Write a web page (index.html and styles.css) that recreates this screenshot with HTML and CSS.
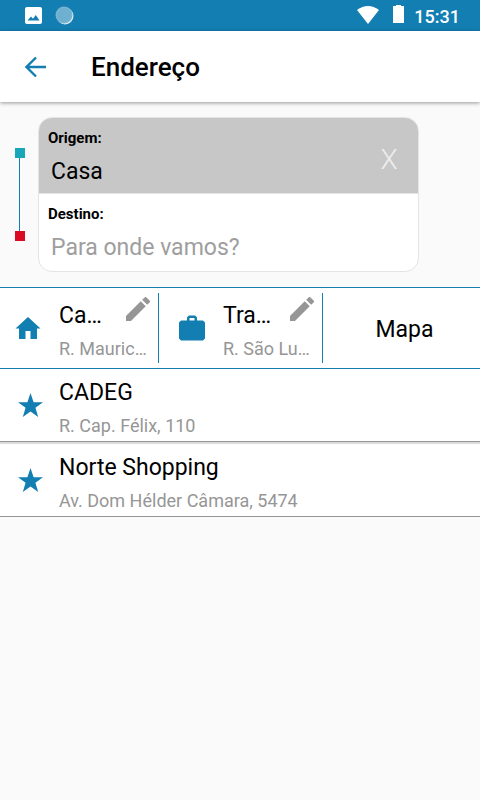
FILE: index.html
```html
<!DOCTYPE html>
<html lang="pt-BR">
<head>
<meta charset="utf-8">
<meta name="viewport" content="width=device-width, initial-scale=1">
<title>Endereço</title>
<link rel="stylesheet" href="styles.css">
</head>
<body>
<div class="status">
  <svg class="status-photo" width="17" height="17" viewBox="0 0 17 17" aria-hidden="true"><rect width="17" height="17" rx="2" fill="#fff"/><path d="M2.500 13.500 6 9.500 8 11.700 10.800 8 14.500 13.500Z" fill="#127eb1"/></svg>
  <svg class="status-sync" width="19" height="19" viewBox="0 0 19 19" aria-hidden="true"><circle cx="10" cy="10" r="8.500" fill="#dcecf4"/><circle cx="9" cy="9" r="8.500" fill="#6fb0d0"/><circle cx="9" cy="9" r="7.500" fill="none" stroke="#86bcd7" stroke-dasharray="1 1"/></svg>
  <svg class="status-wifi" width="22" height="18" viewBox="0 0 22 18" aria-hidden="true"><path d="M0 4Q11-4 22 4L11 18Z" fill="#fff"/></svg>
  <svg class="status-battery" width="11" height="18" viewBox="0 0 11 18" aria-hidden="true"><path d="M0 1H3V0H8V1H11V18H0Z" fill="#fff"/></svg>
  <time class="clock">15:31</time>
</div>
<header class="toolbar">
  <button class="back" type="button" aria-label="Voltar"><svg width="22" height="22" viewBox="0 0 22 22"><path d="M21 11H2M11 1.500 1.500 11 11 20.500" fill="none" stroke="#127eb1" stroke-width="2.400"/></svg></button>
  <h1 class="title">Endereço</h1>
</header>
<main>
  <form class="route">
    <div class="track" aria-hidden="true"><span class="stop stop-from"></span><span class="rail"></span><span class="stop stop-to"></span></div>
    <div class="card">
      <div class="field field-from">
        <div class="entry">
          <label class="label" for="origem">Origem:</label>
          <input class="input" id="origem" type="text" value="Casa">
        </div>
        <button class="clear" type="button" aria-label="Limpar origem">X</button>
      </div>
      <div class="field">
        <div class="entry">
          <label class="label" for="destino">Destino:</label>
          <input class="input" id="destino" type="text" placeholder="Para onde vamos?">
        </div>
      </div>
    </div>
  </form>
  <section class="shortcuts">
    <div class="shortcut">
      <svg class="place-icon" width="26" height="26" viewBox="0 0 26 26" aria-hidden="true"><path d="M13 2 25.500 13.500H22V24H15.500V16H10.500V24H4V13.500H.5Z" fill="#127eb1"/></svg>
      <div class="place">
        <div class="place-head"><span class="name">Ca…</span><button class="edit" type="button" aria-label="Editar Casa"><svg width="24" height="24" viewBox="3 3 18 18"><path d="M3 17.250V21h3.750L17.810 9.940l-3.750-3.750L3 17.250zM20.710 7.040a1 1 0 0 0 0-1.410l-2.340-2.340a1 1 0 0 0-1.410 0l-1.830 1.830 3.750 3.750 1.830-1.830z" fill="#969696"/></svg></button></div>
        <div class="address">R. Mauric…</div>
      </div>
    </div>
    <div class="shortcut">
      <svg class="place-icon" width="26" height="26" viewBox="0 0 26 26" aria-hidden="true"><path d="M2 5.500H8V2.200L10 .5H16L18 2.200V5.500H24L26 7.500V23.500L24 25.500H2L0 23.500V7.500ZM10.500 5.500H15.500V3H10.500Z" fill="#127eb1" fill-rule="evenodd"/></svg>
      <div class="place">
        <div class="place-head"><span class="name">Tra…</span><button class="edit" type="button" aria-label="Editar Trabalho"><svg width="24" height="24" viewBox="3 3 18 18"><path d="M3 17.250V21h3.750L17.810 9.940l-3.750-3.750L3 17.250zM20.710 7.040a1 1 0 0 0 0-1.410l-2.340-2.340a1 1 0 0 0-1.410 0l-1.830 1.830 3.750 3.750 1.830-1.830z" fill="#969696"/></svg></button></div>
        <div class="address">R. São Lu…</div>
      </div>
    </div>
    <button class="map" type="button">Mapa</button>
  </section>
  <ul class="favorites">
    <li class="favorite">
      <svg class="star" width="26" height="26" viewBox="0 0 26 26" aria-hidden="true"><path d="M12.500 1 15.600 10.200H25L17.400 15.800 20.200 25 12.500 19.400 4.800 25 7.600 15.800 0 10.200H9.400Z" fill="#127eb1"/></svg>
      <div class="place"><div class="name">CADEG</div><div class="address">R. Cap. Félix, 110</div></div>
    </li>
    <li class="favorite">
      <svg class="star" width="26" height="26" viewBox="0 0 26 26" aria-hidden="true"><path d="M12.500 1 15.600 10.200H25L17.400 15.800 20.200 25 12.500 19.400 4.800 25 7.600 15.800 0 10.200H9.400Z" fill="#127eb1"/></svg>
      <div class="place"><div class="name">Norte Shopping</div><div class="address">Av. Dom Hélder Câmara, 5474</div></div>
    </li>
  </ul>
</main>
</body>
</html>
```
FILE: styles.css
```css
* { box-sizing: border-box; }
body { margin: 0; background: #fafafa; color: #000; font-family: Roboto, sans-serif; font-size: 23px; line-height: 28px; }
button, input { font: inherit; color: inherit; border: 0; background: none; padding: 0; margin: 0; }
svg { display: block; flex: none; }

.status { display: flex; align-items: center; height: 31px; padding: 0 20px 0 25px; background: #127eb1; color: #fff; }
.status-sync { margin-left: 13px; }
.status-wifi { margin: 0 0 2px auto; }
.status-battery { margin: 0 10px 3px 14px; }
.clock { font-size: 18px; font-weight: 500; line-height: 20px; padding-top: 2px; }

.toolbar { display: flex; align-items: center; height: 71px; padding: 0 25px; background: #fff; box-shadow: 0 1px 4px rgba(0, 0, 0, .4); }
.back { width: 66px; }
.title { margin: 0; font-size: 26px; font-weight: 500; line-height: 32px; }

.route { display: flex; align-items: center; padding: 15px 61px 15px 14px; }
.track { display: flex; flex-direction: column; align-items: center; width: 11px; margin-right: 13px; }
.stop { width: 10px; height: 10px; }
.stop-from { background: #18a7b9; }
.stop-to { background: #d90a22; }
.rail { width: 1px; height: 73px; background: #127eb1; }
.card { flex: 1; overflow: hidden; border: 1px solid #e4e4e4; border-radius: 14px; background: #fff; }
.field { display: flex; align-items: center; height: 77px; padding: 10px 9px 4px; }
.field-from { height: 76px; padding-bottom: 2px; background: #c7c7c7; border-bottom: 1px solid #e4e4e4; }
.entry { flex: 1; min-width: 0; }
.label { display: block; font-size: 15px; font-weight: 700; line-height: 20px; }
.input { display: block; width: 100%; height: 44px; padding: 4px 0 0 3px; outline: 0; }
.input::placeholder { color: #9e9e9e; opacity: 1; }
.clear { width: 40px; color: #eee; font-size: 28px; font-weight: 300; }

.shortcuts { display: grid; grid-template-columns: 159fr 164fr 157fr; height: 82px; padding: 5px 0; border: solid #127eb1; border-width: 1px 0; background: #fff; }
.shortcut { display: flex; align-items: center; padding: 0 8px 0 15px; border-right: 1px solid #127eb1; }
.shortcut + .shortcut { padding-left: 20px; }
.place-icon { margin-right: 18px; }
.place { flex: 1; min-width: 0; padding-top: 2px; }
.place-head { display: flex; justify-content: space-between; }
.edit { height: 24px; margin-top: 1px; }
.name { line-height: 39px; }
.address { color: #969696; font-size: 18px; line-height: 28px; }
.map { padding: 3px 0 0 6px; }

.favorites { display: grid; gap: 2px; margin: 0; padding: 0; list-style: none; background: #dcdcdc; }
.favorite { display: flex; align-items: center; height: 73px; padding-left: 18px; border-bottom: 1px solid #969696; background: #fff; }
.star { margin-right: 15px; }
```
